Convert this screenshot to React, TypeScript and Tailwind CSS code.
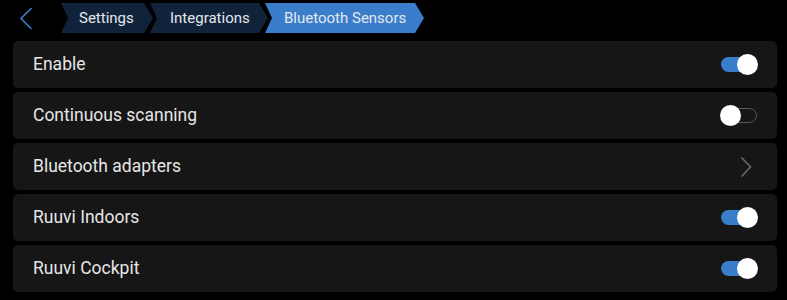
import React, { useState } from 'react';

const segShape =
  '[clip-path:polygon(0_0,calc(100%-9px)_0,100%_50%,calc(100%-9px)_100%,0_100%,7px_50%)]';

const Crumb: React.FC<{ label: string; active?: boolean; className?: string }> = ({ label, active, className }) => (
  <div
    className={`h-[30px] flex items-center text-[15px] text-[#e4e8ee] ${segShape} ${
      active ? 'bg-[#3a7dcb]' : 'bg-[#10233a]'
    } ${className ?? ''}`}
  >
    {label}
  </div>
);

const Toggle: React.FC<{ on: boolean; onClick: () => void }> = ({ on, onClick }) => (
  <button onClick={onClick} className="relative w-[36px] h-[20px] flex items-center">
    <span
      className={`absolute left-0 right-0 h-[15px] rounded-full ${
        on ? 'bg-[#3a7dcb]' : 'border-[1.5px] border-[#5a5a5a]'
      }`}
    />
    <span
      className={`absolute w-[21px] h-[21px] rounded-full bg-white ${on ? 'right-[-1px]' : 'left-[-1px]'}`}
    />
  </button>
);

const App: React.FC = () => {
  const [toggles, setToggles] = useState<Record<string, boolean>>({
    enable: true,
    scanning: false,
    indoors: true,
    cockpit: true,
  });

  const flip = (k: string) => setToggles((t) => ({ ...t, [k]: !t[k] }));

  const rows = [
    { key: 'enable', label: 'Enable' },
    { key: 'scanning', label: 'Continuous scanning' },
    { key: 'adapters', label: 'Bluetooth adapters', link: true },
    { key: 'indoors', label: 'Ruuvi Indoors' },
    { key: 'cockpit', label: 'Ruuvi Cockpit' },
  ];

  return (
    <div className="w-[787px] h-[300px] bg-black overflow-hidden font-['Roboto',sans-serif]">
      <div className="h-[41px] flex items-start pt-[3px]">
        <button className="ml-[19px] mt-[4px] w-[14px] h-[23px]">
          <svg width="14" height="23" viewBox="0 0 14 23" fill="none">
            <path d="M12.5 1 L2 11.5 L12.5 22" stroke="#3a7dd6" strokeWidth="1.6" />
          </svg>
        </button>
        <div className="ml-[28px] flex">
          <Crumb label="Settings" className="w-[92px] pl-[18px]" />
          <Crumb label="Integrations" className="w-[118px] pl-[20px] -ml-[3px]" />
          <Crumb label="Bluetooth Sensors" active className="w-[159px] pl-[19px] -ml-[3px]" />
        </div>
      </div>

      <div className="ml-[13px] mr-[10px] flex flex-col gap-[4px]">
        {rows.map((r) => (
          <div
            key={r.key}
            className="h-[47px] rounded-[5px] bg-[#161616] flex items-center justify-between pl-[20px] pr-[20px]"
          >
            <span className="text-[17.5px] text-[#e6e6e6]">{r.label}</span>
            {r.link ? (
              <svg width="12" height="22" viewBox="0 0 12 22" fill="none" className="mr-[5px]">
                <path d="M1.5 1.5 L10.5 11 L1.5 20.5" stroke="#6b6b6b" strokeWidth="1.6" />
              </svg>
            ) : (
              <Toggle on={toggles[r.key]} onClick={() => flip(r.key)} />
            )}
          </div>
        ))}
      </div>
    </div>
  );
};

export default App;
